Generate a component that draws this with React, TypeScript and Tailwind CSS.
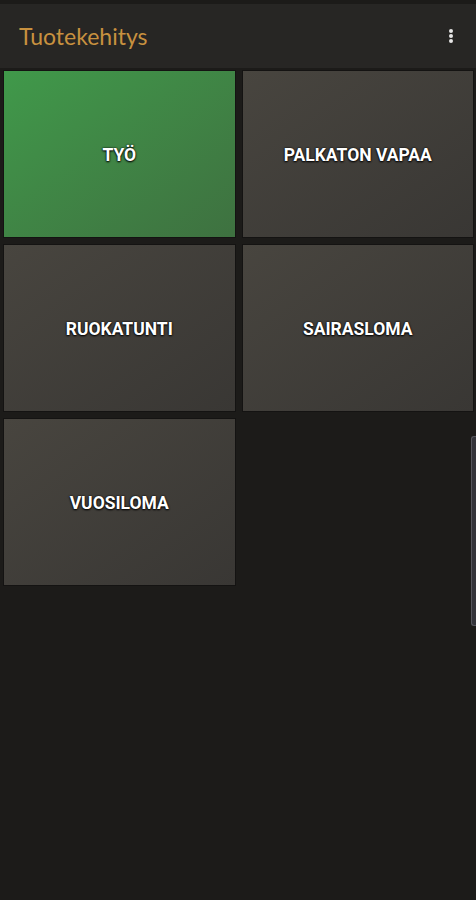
import React from 'react';

const tiles = [
  { label: 'TYÖ', active: true },
  { label: 'PALKATON VAPAA' },
  { label: 'RUOKATUNTI' },
  { label: 'SAIRASLOMA' },
  { label: 'VUOSILOMA' },
];

export default function App() {
  return (
    <div className="relative h-[900px] w-[476px] overflow-hidden bg-[#1c1b19] font-['Roboto',sans-serif]">
      <div className="h-[4px] bg-[#1c1b19]" />
      <header className="flex h-[64px] items-center justify-between bg-[#272624] pl-[19px] pr-[23px]">
        <h1 className="font-['Lato',sans-serif] text-[23px] leading-none text-[#c8913f]">Tuotekehitys</h1>
        <div className="flex flex-col gap-[1px]">
          <span className="h-[4px] w-[4px] rounded-full bg-[#e6e6e6]" />
          <span className="h-[4px] w-[4px] rounded-full bg-[#e6e6e6]" />
          <span className="h-[4px] w-[4px] rounded-full bg-[#e6e6e6]" />
        </div>
      </header>

      <div className="mt-[2px] grid grid-cols-2 gap-[6px] pl-[3px] pr-[2px]">
        {tiles.map((t) => (
          <button
            key={t.label}
            className={
              'flex h-[168px] items-center justify-center border border-[#141312] pt-[3px] text-[17.5px] font-bold text-white [text-shadow:0_0_2px_#000,0_1px_2px_#000] ' +
              (t.active
                ? 'bg-gradient-to-br from-[#40994a] to-[#3e7140]'
                : 'bg-gradient-to-br from-[#48453f] to-[#393734]')
            }
          >
            {t.label}
          </button>
        ))}
      </div>

      <div className="absolute right-0 top-[436px] h-[190px] w-[5px] rounded-l-[3px] border border-r-0 border-[#55555c] bg-[#34343a]" />
    </div>
  );
}
